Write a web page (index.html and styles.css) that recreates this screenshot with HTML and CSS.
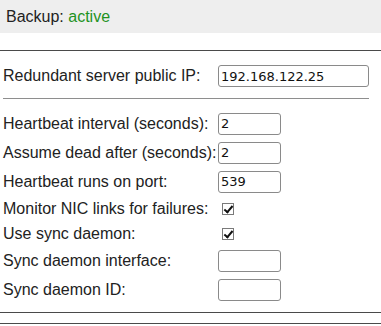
FILE: index.html
```html
<!DOCTYPE html>
<html lang="en">
<head>
  <meta charset="UTF-8">
  <meta name="viewport" content="width=device-width, initial-scale=1.0">
  <title>Backup settings</title>
  <link rel="stylesheet" href="styles.css">
</head>
<body>

  <div class="status">Backup: <span class="active">active</span></div>

  <hr class="rule">

  <div class="ip-row">
    <label for="peer-ip">Redundant server public IP:</label>
    <input type="text" id="peer-ip" class="wide" value="192.168.122.25">
  </div>

  <hr class="rule light">

  <div class="fields">
    <label for="hb-interval">Heartbeat interval (seconds):</label>
    <input type="text" id="hb-interval" value="2">

    <label for="dead-after">Assume dead after (seconds):</label>
    <input type="text" id="dead-after" value="2">

    <label for="hb-port">Heartbeat runs on port:</label>
    <input type="text" id="hb-port" value="539">

    <label for="nic-links">Monitor NIC links for failures:</label>
    <input type="checkbox" id="nic-links" checked>

    <label for="sync-daemon">Use sync daemon:</label>
    <input type="checkbox" id="sync-daemon" checked>

    <label for="sync-iface">Sync daemon interface:</label>
    <input type="text" id="sync-iface" value="">

    <label for="sync-id">Sync daemon ID:</label>
    <input type="text" id="sync-id" value="">
  </div>

  <hr class="rule bottom">
  <hr class="rule last">

</body>
</html>
```

FILE: styles.css
```css
body {
  margin: 0;
  font-family: 'Liberation Sans', Arial, sans-serif;
  font-size: 16px;
  color: #222;
}

.status {
  background: #eeeeee;
  height: 33px;
  line-height: 33px;
  padding-left: 6px;
}

.status .active {
  color: #1f931f;
}

.rule {
  border: none;
  border-top: 1px solid #4a4a4a;
  margin: 17px 0 0;
}

.rule.light {
  border-top-color: #8e8e8e;
  margin: 0 12px 0 3px;
}

.rule.bottom {
  margin-top: 8px;
}

.rule.last {
  margin-top: 10px;
}

.ip-row {
  display: grid;
  grid-template-columns: 215px 151px;
  align-items: center;
  padding: 14px 0 11px 3px;
}

input[type="text"] {
  box-sizing: border-box;
  height: 22px;
  width: 63px;
  margin: 0;
  padding: 0 2px;
  border: 1px solid #8a8a8a;
  border-radius: 3px;
  font-family: 'DejaVu Sans', sans-serif;
  font-size: 13px;
  color: #111;
  background: #fff;
}

input.wide {
  width: 151px;
}

.fields {
  display: grid;
  grid-template-columns: 215px auto;
  grid-template-rows: 29px 29px 29px 25px 25px 29px 29px;
  align-items: center;
  justify-items: start;
  padding: 10px 0 0 3px;
}

input[type="checkbox"] {
  appearance: none;
  -webkit-appearance: none;
  position: relative;
  box-sizing: border-box;
  width: 12px;
  height: 12px;
  margin: 0 0 0 4px;
  border: 1px solid #7a7a7a;
  background: #fff;
}

input[type="checkbox"]:checked::after {
  content: '';
  position: absolute;
  left: 3px;
  top: 0;
  width: 3px;
  height: 7px;
  border: solid #111;
  border-width: 0 2px 2px 0;
  transform: rotate(40deg);
}
```
